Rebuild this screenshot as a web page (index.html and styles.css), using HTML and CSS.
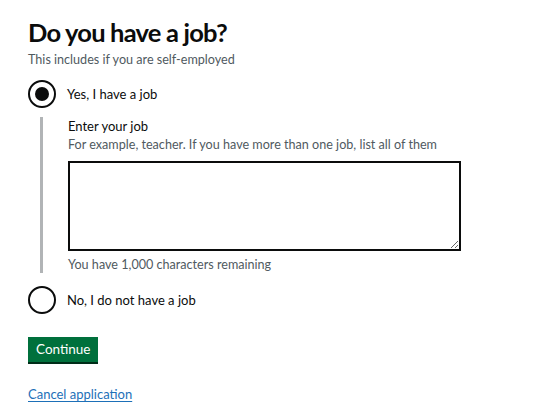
FILE: index.html
```html
<!DOCTYPE html>
<html lang="en">
<head>
<meta charset="utf-8">
<title>Do you have a job?</title>
<link rel="stylesheet" href="styles.css">
</head>
<body>
<main class="page">
  <form class="form">
    <fieldset class="fieldset">
      <legend class="heading">Do you have a job?</legend>
      <div class="hint">This includes if you are self-employed</div>

      <div class="radios">
        <label class="radio">
          <input class="radio-input" type="radio" name="job" value="yes" checked>
          <span class="radio-mark"></span>
          <span class="radio-label">Yes, I have a job</span>
        </label>

        <div class="conditional">
          <label class="field-label" for="job-desc">Enter your job</label>
          <div class="hint">For example, teacher. If you have more than one job, list all of them</div>
          <textarea class="textarea" id="job-desc" rows="5"></textarea>
          <div class="count">You have 1,000 characters remaining</div>
        </div>

        <label class="radio">
          <input class="radio-input" type="radio" name="job" value="no">
          <span class="radio-mark"></span>
          <span class="radio-label">No, I do not have a job</span>
        </label>
      </div>
    </fieldset>

    <button class="button" type="button">Continue</button>

    <p class="cancel"><a class="link" href="#">Cancel application</a></p>
  </form>
</main>
</body>
</html>
```
FILE: styles.css
```css
* { box-sizing: border-box; }

body {
  margin: 0;
  background: #ffffff;
  color: #0b0c0c;
  font-family: Lato, "Liberation Sans", Arial, sans-serif;
}

.page {
  padding: 16px 28px 0;
}

.fieldset {
  margin: 0;
  padding: 0;
  border: 0;
}

.heading {
  display: block;
  padding: 0;
  margin: 0 0 2px;
  font-size: 25.5px;
  line-height: 32px;
  font-weight: 700;
  letter-spacing: -0.8px;
}

.hint {
  color: #505a5f;
  font-size: 12.6px;
  line-height: 20px;
}

.radios {
  margin-top: 10px;
  display: flex;
  flex-direction: column;
}

.radio {
  display: flex;
  align-items: center;
  gap: 11px;
  height: 28px;
  cursor: pointer;
}

.radio-input {
  position: absolute;
  opacity: 0;
  width: 0;
  height: 0;
  margin: 0;
}

.radio-mark {
  position: relative;
  width: 28px;
  height: 28px;
  border: 2px solid #0b0c0c;
  border-radius: 50%;
  flex: none;
}

.radio-input:checked + .radio-mark::after {
  content: "";
  position: absolute;
  left: 5px;
  top: 5px;
  width: 14px;
  height: 14px;
  border-radius: 50%;
  background: #0b0c0c;
}

.radio-label {
  font-size: 13px;
  line-height: 20px;
}

.conditional {
  margin: 9px 0 13px 12px;
  padding: 0 0 0 25px;
  border-left: 3px solid #b1b4b6;
}

.field-label {
  display: block;
  font-size: 13px;
  line-height: 18px;
}

.textarea {
  display: block;
  width: 393px;
  height: 90px;
  margin-top: 6px;
  border: 2px solid #0b0c0c;
  border-radius: 0;
  resize: vertical;
  font: inherit;
}

.count {
  margin-top: 5px;
  color: #505a5f;
  font-size: 12.6px;
  line-height: 17px;
}

.button {
  display: block;
  margin-top: 23px;
  padding: 0 8px;
  height: 25px;
  border: 0;
  border-radius: 0;
  background: #00703c;
  box-shadow: 0 2px 0 #002d18;
  color: #ffffff;
  font: inherit;
  font-size: 13.5px;
  line-height: 25px;
  cursor: pointer;
}

.cancel {
  margin: 22px 0 0;
  font-size: 13px;
  line-height: 20px;
}

.link {
  color: #1d70b8;
  text-decoration: underline;
  text-underline-offset: 2px;
}
```
